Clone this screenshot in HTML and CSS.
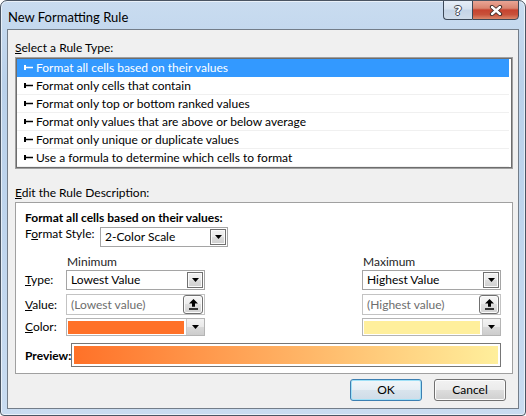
FILE: index.html
```html
<!DOCTYPE html>
<html>
<head>
<meta charset="utf-8">
<link rel="stylesheet" href="styles.css">
</head>
<body>
<div class="window">
  <div class="titlebar">
    <span class="title">New Formatting Rule</span>
    <div class="caption">
      <div class="cbtn help"><span class="qmark">?</span></div>
      <div class="cbtn close">
        <svg class="xicon" width="14" height="11" viewBox="0 0 14 11">
          <path d="M3 2 L11 9 M11 2 L3 9" stroke="#3b2a26" stroke-width="4.2" stroke-linecap="round" fill="none"/>
          <path d="M3 2 L11 9 M11 2 L3 9" stroke="#ffffff" stroke-width="2.4" stroke-linecap="round" fill="none"/>
        </svg>
      </div>
    </div>
  </div>
  <div class="client">
    <div class="label"><u>S</u>elect a Rule Type:</div>
    <ul class="rulelist">
      <li class="item selected"><svg class="bullet" width="9" height="7" viewBox="0 0 9 7"><path d="M0 1h2v5H0z M2 2.8h7v1.5H2z" fill="currentColor"/></svg>Format all cells based on their values</li>
      <li class="item"><svg class="bullet" width="9" height="7" viewBox="0 0 9 7"><path d="M0 1h2v5H0z M2 2.8h7v1.5H2z" fill="currentColor"/></svg>Format only cells that contain</li>
      <li class="item"><svg class="bullet" width="9" height="7" viewBox="0 0 9 7"><path d="M0 1h2v5H0z M2 2.8h7v1.5H2z" fill="currentColor"/></svg>Format only top or bottom ranked values</li>
      <li class="item"><svg class="bullet" width="9" height="7" viewBox="0 0 9 7"><path d="M0 1h2v5H0z M2 2.8h7v1.5H2z" fill="currentColor"/></svg>Format only values that are above or below average</li>
      <li class="item"><svg class="bullet" width="9" height="7" viewBox="0 0 9 7"><path d="M0 1h2v5H0z M2 2.8h7v1.5H2z" fill="currentColor"/></svg>Format only unique or duplicate values</li>
      <li class="item"><svg class="bullet" width="9" height="7" viewBox="0 0 9 7"><path d="M0 1h2v5H0z M2 2.8h7v1.5H2z" fill="currentColor"/></svg>Use a formula to determine which cells to format</li>
    </ul>
    <div class="label section"><u>E</u>dit the Rule Description:</div>
    <div class="desc">
      <div class="desc-title">Format all cells based on their values:</div>
      <div class="style-row">
        <span class="style-label">F<u>o</u>rmat Style:</span>
        <div class="combo style-combo"><span class="combo-text">2-Color Scale</span><span class="dd"><svg width="7" height="4" viewBox="0 0 7 4"><path d="M0 0h7L3.5 4z" fill="#000"/></svg></span></div>
      </div>
      <div class="scale-grid">
        <div></div>
        <div class="head">Minimum</div>
        <div></div>
        <div class="head">Maximum</div>

        <div class="rlabel r1"><u>T</u>ype:</div>
        <div class="combo"><span class="combo-text">Lowest Value</span><span class="dd"><svg width="7" height="4" viewBox="0 0 7 4"><path d="M0 0h7L3.5 4z" fill="#000"/></svg></span></div>
        <div></div>
        <div class="combo"><span class="combo-text">Highest Value</span><span class="dd"><svg width="7" height="4" viewBox="0 0 7 4"><path d="M0 0h7L3.5 4z" fill="#000"/></svg></span></div>

        <div class="rlabel r2"><u>V</u>alue:</div>
        <div class="field"><span class="placeholder">(Lowest value)</span><span class="refbtn"><svg width="9" height="11" viewBox="0 0 9 11"><path d="M4.5 0L9 4.6H6v3.2H3V4.6H0z M0 9.2h9v1.6H0z" fill="#000"/></svg></span></div>
        <div></div>
        <div class="field"><span class="placeholder">(Highest value)</span><span class="refbtn"><svg width="9" height="11" viewBox="0 0 9 11"><path d="M4.5 0L9 4.6H6v3.2H3V4.6H0z M0 9.2h9v1.6H0z" fill="#000"/></svg></span></div>

        <div class="rlabel r3"><u>C</u>olor:</div>
        <div class="colorbox"><span class="swatch min"></span><span class="cdd"><svg width="7" height="4" viewBox="0 0 7 4"><path d="M0 0h7L3.5 4z" fill="#000"/></svg></span></div>
        <div></div>
        <div class="colorbox"><span class="swatch max"></span><span class="cdd"><svg width="7" height="4" viewBox="0 0 7 4"><path d="M0 0h7L3.5 4z" fill="#000"/></svg></span></div>
      </div>
      <div class="preview-row">
        <span class="preview-label">Preview:</span>
        <div class="preview"><div class="gradient"></div></div>
      </div>
    </div>
    <div class="buttons">
      <button class="btn ok">OK</button>
      <button class="btn">Cancel</button>
    </div>
  </div>
</div>
</body>
</html>
```

FILE: styles.css
```css
body {
  margin: 0;
  background: #ffffff;
  font-family: "Segoe UI", Lato, "Liberation Sans", sans-serif;
  font-size: 12px;
  color: #000;
}

.window {
  width: 526px;
  height: 416px;
  box-sizing: border-box;
  border: 1px solid #4a5563;
  border-radius: 7px 7px 4px 4px;
  padding: 0 6px 6px 6px;
  background: linear-gradient(180deg, #c9dcf0 0%, #bad1ea 20%, #bfd5ed 55%, #c9dcf1 100%);
  box-shadow: inset 0 0 0 1px rgba(255, 255, 255, 0.6);
  display: flex;
  flex-direction: column;
  overflow: hidden;
}

.titlebar {
  height: 28px;
  flex-shrink: 0;
  display: flex;
  justify-content: space-between;
  align-items: flex-start;
}

.title {
  padding: 8px 0 0 1px;
  font-size: 13px;
  line-height: 16px;
  color: #000;
}

.caption {
  display: flex;
  margin-top: -1px;
}

.cbtn {
  height: 20px;
  box-sizing: border-box;
  border: 1px solid #3d4958;
  display: flex;
  align-items: center;
  justify-content: center;
}

.help {
  width: 29px;
  border-right: none;
  border-radius: 0 0 0 4px;
  background: linear-gradient(180deg, #e6eef7 0%, #d6e2ef 45%, #c4d4e6 50%, #cfdcea 100%);
}

.qmark {
  font-family: "DejaVu Sans", sans-serif;
  font-weight: bold;
  font-size: 13px;
  line-height: 14px;
  color: #ffffff;
  text-shadow: 1px 0 0 #3d4450, -1px 0 0 #3d4450, 0 1px 0 #3d4450, 0 -1px 0 #3d4450;
  margin-top: 1px;
}

.close {
  width: 47px;
  border-radius: 0 0 4px 0;
  background: linear-gradient(180deg, #e9a595 0%, #d98570 40%, #c6432f 50%, #c8513a 75%, #dc876a 100%);
}

.client {
  flex: 1;
  border: 1px solid #737d89;
  background: #f0f0f0;
  padding: 10px 5px 7px 7px;
  display: flex;
  flex-direction: column;
}

.label {
  line-height: 15px;
  height: 15px;
  margin-bottom: 2px;
}

.label.section {
  margin-top: 16px;
}

.rulelist {
  list-style: none;
  margin: 0;
  height: 112px;
  box-sizing: border-box;
  border: 1px solid #a0a0a0;
  box-shadow: inset 0 0 0 1px #6d6d6d;
  padding: 1px 3px 1px 1px;
  background: #ffffff;
}

.item {
  height: 18px;
  box-sizing: border-box;
  border-bottom: 1px solid #f0f0f0;
  display: flex;
  align-items: center;
  padding-left: 7px;
  line-height: 16px;
}

.item.selected {
  background: #3399ff;
  color: #ffffff;
  border-bottom-color: #3399ff;
}

.bullet {
  margin-right: 3px;
  flex-shrink: 0;
}

.desc {
  height: 172px;
  box-sizing: border-box;
  border: 1px solid #a0a0a0;
  background: #ffffff;
  padding: 7px 11px 6px 9px;
}

.desc-title {
  font-weight: bold;
  line-height: 15px;
  height: 15px;
}

.style-row {
  display: flex;
  align-items: flex-start;
  margin-top: 2px;
}

.style-label {
  width: 75px;
  line-height: 15px;
  margin-top: -1px;
}

.combo {
  height: 20px;
  box-sizing: border-box;
  border: 1px solid #a5a5a5;
  background: #ffffff;
  display: flex;
  align-items: stretch;
}

.style-combo {
  width: 128px;
}

.combo-text {
  flex: 1;
  padding-left: 4px;
  line-height: 18px;
}

.dd {
  width: 16px;
  margin: 1px 1px 1px 0;
  box-sizing: border-box;
  border: 1px solid #707070;
  box-shadow: inset 0 0 0 1px #fbfbfb;
  background: linear-gradient(180deg, #f2f2f2 0%, #ebebeb 50%, #dddddd 50%, #cfcfcf 100%);
  display: flex;
  align-items: center;
  justify-content: center;
}

.scale-grid {
  margin-top: 7px;
  display: grid;
  grid-template-columns: 41px 139px 1fr 139px;
  grid-template-rows: 16px 24px 24px 18px;
}

.head {
  line-height: 15px;
  padding-left: 1px;
  color: #1e1e1e;
}

.rlabel.r1 { line-height: 20px; }
.rlabel.r2 { line-height: 21px; }
.rlabel.r3 { line-height: 18px; }

.scale-grid > .combo { align-self: start; }

.field {
  align-self: start;
  height: 21px;
  box-sizing: border-box;
  border: 1px solid #c3c3c3;
  background: #ffffff;
  display: flex;
  align-items: stretch;
}

.placeholder {
  flex: 1;
  padding-left: 4px;
  line-height: 19px;
  color: #6d6d6d;
}

.refbtn {
  width: 20px;
  margin: 0 1px 0 0;
  box-sizing: border-box;
  border: 1px solid #707070;
  border-radius: 3px;
  background: linear-gradient(180deg, #f6f6f6 0%, #ececec 50%, #dedede 50%, #d2d2d2 100%);
  box-shadow: inset 0 0 0 1px #fcfcfc;
  display: flex;
  align-items: center;
  justify-content: center;
}

.colorbox {
  height: 18px;
  box-sizing: border-box;
  border: 1px solid #b4b4b4;
  background: #ffffff;
  display: flex;
  align-items: stretch;
  padding: 2px 0 1px 1px;
}

.swatch {
  flex: 1;
  margin-right: 2px;
}

.swatch.min { background: #ff7128; }
.swatch.max { background: #ffef9c; }

.cdd {
  width: 18px;
  margin-top: -2px;
  margin-bottom: -1px;
  box-sizing: border-box;
  background: linear-gradient(180deg, #f3f3f3 0%, #e9e9e9 50%, #d9d9d9 50%, #cdcdcd 100%);
  border-left: 1px solid #c9c9c9;
  display: flex;
  align-items: center;
  justify-content: center;
}

.preview-row {
  margin-top: 7px;
  display: flex;
  align-items: center;
}

.preview-label {
  width: 46px;
  flex-shrink: 0;
  font-weight: bold;
  line-height: 15px;
}

.preview {
  flex: 1;
  height: 24px;
  box-sizing: border-box;
  border: 1px solid #767676;
  background: #ffffff;
  padding: 2px;
}

.gradient {
  height: 100%;
  background: linear-gradient(90deg, #ff7128 0%, #ffef9c 100%);
}

.buttons {
  margin-top: 5px;
  margin-right: 7px;
  display: flex;
  justify-content: flex-end;
  gap: 12px;
}

.btn {
  width: 72px;
  height: 22px;
  box-sizing: border-box;
  border: 1px solid #707070;
  border-radius: 3px;
  background: linear-gradient(180deg, #f2f2f2 0%, #ebebeb 50%, #dddddd 50%, #cfcfcf 100%);
  box-shadow: inset 0 0 0 1px #fcfcfc;
  font-family: "Segoe UI", Lato, "Liberation Sans", sans-serif;
  font-size: 12px;
  color: #000;
  padding: 0;
  line-height: 18px;
}

.btn.ok {
  border-color: #3c7fb1;
  box-shadow: inset 0 0 0 1px #9fe0f7;
  background: linear-gradient(180deg, #f1f6fa 0%, #e6eef5 50%, #d9e4ed 50%, #cfdce8 100%);
}
```
